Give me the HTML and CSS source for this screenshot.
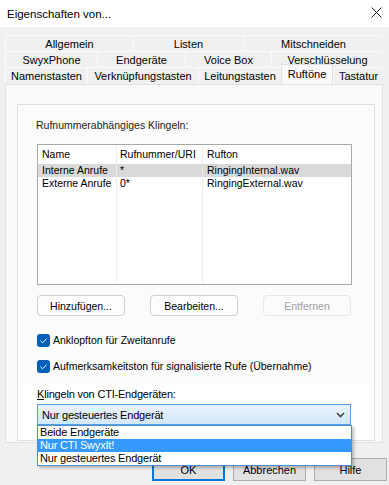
FILE: index.html
```html
<!DOCTYPE html>
<html lang="de">
<head>
<meta charset="utf-8">
<title>Eigenschaften von...</title>
<link rel="stylesheet" href="styles.css">
</head>
<body>
<div class="titlebar">
  <span class="title">Eigenschaften von...</span>
  <svg class="close" viewBox="0 0 11 11" width="11" height="11"><path d="M0.5 0.5L10.5 10.5M10.5 0.5L0.5 10.5" stroke="#1a1a1a" stroke-width="1" fill="none"/></svg>
</div>
<div class="content">
  <div class="tabs">
    <div class="tabrow">
      <div class="tab" style="width:128px">Allgemein</div>
      <div class="tab" style="width:110px">Listen</div>
      <div class="tab" style="width:140px">Mitschneiden</div>
    </div>
    <div class="tabrow">
      <div class="tab" style="width:92px">SwyxPhone</div>
      <div class="tab" style="width:88px">Endgeräte</div>
      <div class="tab" style="width:86px">Voice Box</div>
      <div class="tab" style="width:112px">Verschlüsselung</div>
    </div>
    <div class="tabrow last">
      <div class="tab" style="width:82px">Namenstasten</div>
      <div class="tab" style="width:111px">Verknüpfungstasten</div>
      <div class="tab" style="width:83px">Leitungstasten</div>
      <div class="tab sel" style="width:52px">Ruftöne</div>
      <div class="tab" style="width:50px">Tastatur</div>
    </div>
  </div>
  <div class="page">
    <div class="frame">
      <div class="upper">
        <div class="label">Rufnummerabhängiges Klingeln:</div>
        <div class="list">
          <div class="col c1">
            <div class="cell head">Name</div>
            <div class="cell hl">Interne Anrufe</div>
            <div class="cell">Externe Anrufe</div>
          </div>
          <div class="col c2">
            <div class="cell head">Rufnummer/URI</div>
            <div class="cell hl">*</div>
            <div class="cell">0*</div>
          </div>
          <div class="col c3">
            <div class="cell head">Rufton</div>
            <div class="cell hl">RingingInternal.wav</div>
            <div class="cell">RingingExternal.wav</div>
          </div>
        </div>
        <div class="btnrow">
          <div class="btn">Hinzufügen...</div>
          <div class="btn">Bearbeiten...</div>
          <div class="btn disabled">Entfernen</div>
        </div>
        <div class="check first">
          <span class="cb"><svg viewBox="0 0 13 13" width="13" height="13"><path d="M3.5 6.8L5.6 8.8L9.6 4.6" stroke="#fff" stroke-width="1" fill="none"/></svg></span>
          <span>Anklopfton für Zweitanrufe</span>
        </div>
        <div class="check">
          <span class="cb"><svg viewBox="0 0 13 13" width="13" height="13"><path d="M3.5 6.8L5.6 8.8L9.6 4.6" stroke="#fff" stroke-width="1" fill="none"/></svg></span>
          <span>Aufmerksamkeitston für signalisierte Rufe (Übernahme)</span>
        </div>
      </div>
      <div class="lower">
        <div class="label2"><u>K</u>lingeln von CTI-Endgeräten:</div>
        <div class="combo">
          <span>Nur gesteuertes Endgerät</span>
          <svg class="chev" viewBox="0 0 9 6" width="9" height="6"><path d="M1 1L4.5 4.5L8 1" stroke="#444" stroke-width="1.6" fill="none"/></svg>
        </div>
      </div>
    </div>
  </div>
  <div class="dlgbtns">
    <div class="dbtn default">OK</div>
    <div class="dbtn">Abbrechen</div>
    <div class="dbtn">Hilfe</div>
  </div>
</div>
<div class="droplist">
  <div class="item">Beide Endgeräte</div>
  <div class="item sel">Nur CTI SwyxIt!</div>
  <div class="item">Nur gesteuertes Endgerät</div>
</div>
</body>
</html>
```

FILE: styles.css
```css
* { box-sizing: border-box; }
body {
  margin: 0;
  width: 389px;
  height: 485px;
  overflow: hidden;
  position: relative;
  background: #f0f0f0;
  font-family: "Liberation Sans", Arial, sans-serif;
  font-size: 10.5px;
  color: #000;
}
.titlebar {
  height: 27px;
  background: #fff;
  display: flex;
  align-items: center;
  justify-content: space-between;
  padding: 0 7px 0 7px;
  font-size: 11.5px;
}
.close { display: block; margin-top: -2px; }
.content { padding: 8px 0 0 5px; }
.tabs { width: 378px; font-size: 11px; }
.tabrow { display: flex; height: 16px; }
.tabrow.last { height: 17px; align-items: flex-end; }
.tab {
  height: 100%;
  background: #f0f0f0;
  border-top: 1px solid #fafafa;
  border-left: 1px solid #fafafa;
  display: flex;
  align-items: center;
  justify-content: center;
  line-height: 14px;
  white-space: nowrap;
}
.tab.sel {
  position: relative;
  height: 20px;
  background: #f9f9f9;
  border: 1px solid #e2e2e2;
  border-bottom: none;
  align-items: flex-start;
  padding-top: 2px;
}
.page {
  width: 378px;
  height: 359px;
  background: #f9f9f9;
  border: 1px solid #e2e2e2;
  padding: 19px 0 0 11px;
}
.frame {
  width: 358px;
  border: 1px solid #e0e0e0;
  background: #fbfbfb;
}
.upper { height: 279px; padding: 13px 0 0 19px; }
.label { line-height: 14px; height: 14px; margin-left: -1px; margin-bottom: 12px; color: #1a1a1a; }
.list {
  width: 315px;
  height: 141px;
  border: 1px solid #a9a9a9;
  background: #fff;
  display: flex;
}
.col { border-right: 1px solid #ececec; }
.c1 { width: 79px; }
.c2 { width: 86px; }
.c3 { flex: 1; border-right: none; }
.cell { height: 13px; line-height: 13px; white-space: nowrap; }
.cell.head { height: 19px; line-height: 18px; }
.c1 .cell { padding-left: 4px; }
.c2 .cell { padding-left: 3px; }
.c3 .cell { padding-left: 4px; }
.cell.hl { background: #d9d9d9; }
.btnrow { display: flex; gap: 25px; margin-top: 10px; }
.btn {
  width: 88px;
  height: 21px;
  border: 1px solid #d0d0d0;
  border-radius: 4px;
  background: #fdfdfd;
  display: flex;
  align-items: center;
  justify-content: center;
}
.btn.disabled { color: #a0a0a0; border-color: #e8e8e8; background: #fbfbfb; }
.check { display: flex; align-items: center; gap: 3px; height: 14px; margin-top: 12px; }
.check.first { margin-top: 17px; }
.cb {
  width: 13px;
  height: 13px;
  border-radius: 3px;
  background: #005fb8;
  display: block;
}
.cb svg { display: block; }
.lower { height: 56px; background: #fff; padding: 3px 0 0 19px; font-size: 11px; }
.label2 { line-height: 14px; height: 14px; letter-spacing: -0.2px; }
.combo {
  margin-top: 3px;
  width: 314px;
  height: 21px;
  border: 1px solid #5a9fe6;
  background: linear-gradient(#eaf3fc, #d3e7fa);
  display: flex;
  align-items: center;
  justify-content: space-between;
  padding: 0 5px 0 4px;
  letter-spacing: -0.2px;
}
.chev { display: block; }
.dlgbtns { display: flex; gap: 8px; margin: 15px 0 0 147px; font-size: 11px; }
.dbtn {
  width: 73px;
  height: 23px;
  flex: none;
  border: 1px solid #adadad;
  background: #e1e1e1;
  display: flex;
  align-items: center;
  justify-content: center;
}
.dbtn.default { border: 2px solid #0078d7; }
.droplist {
  position: absolute;
  left: 37px;
  top: 425px;
  width: 315px;
  height: 41px;
  background: #fff;
  border: 1px solid #4a8fd8;
  box-shadow: 2px 2px 3px rgba(0,0,0,0.25);
  font-size: 11px;
  letter-spacing: -0.2px;
}
.item { height: 13px; line-height: 13px; padding-left: 2px; white-space: nowrap; }
.item.sel { background: #3399ff; color: #fff; }
```
